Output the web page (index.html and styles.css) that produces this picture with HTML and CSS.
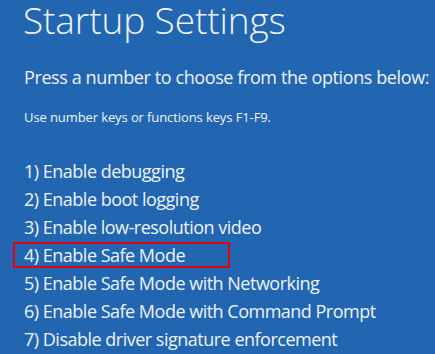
FILE: index.html
```html
<!DOCTYPE html>
<html lang="en">
<head>
<meta charset="utf-8">
<title>Startup Settings</title>
<link rel="stylesheet" href="styles.css">
</head>
<body>
<main class="screen">
  <h1 class="title">Startup Settings</h1>
  <p class="prompt">Press a number to choose from the options below:</p>
  <p class="hint">Use number keys or functions keys F1-F9.</p>
  <ol class="options">
    <li>1) Enable debugging</li>
    <li>2) Enable boot logging</li>
    <li>3) Enable low-resolution video</li>
    <li class="selected">4) Enable Safe Mode</li>
    <li>5) Enable Safe Mode with Networking</li>
    <li>6) Enable Safe Mode with Command Prompt</li>
    <li>7) Disable driver signature enforcement</li>
  </ol>
</main>
</body>
</html>
```

FILE: styles.css
```css
html, body {
  margin: 0;
  padding: 0;
  background: #2266b1;
}

.screen {
  width: 435px;
  height: 354px;
  overflow: hidden;
  box-sizing: border-box;
  padding: 0 0 0 23px;
  color: #eef3fa;
  font-family: "Open Sans", "Noto Sans", sans-serif;
}

.title {
  margin: 0;
  font-size: 37px;
  line-height: 40px;
  font-weight: 300;
  letter-spacing: -0.1px;
  white-space: nowrap;
}

.prompt {
  margin: 25px 0 0 1px;
  font-size: 18px;
  line-height: 24px;
  font-weight: 400;
  letter-spacing: -0.4px;
  white-space: nowrap;
}

.hint {
  margin: 19px 0 0 1px;
  font-size: 13px;
  line-height: 18px;
  letter-spacing: -0.1px;
  white-space: nowrap;
}

.options {
  list-style: none;
  margin: 31px 0 0 1px;
  padding: 0;
  font-size: 18px;
  line-height: 28px;
  letter-spacing: -0.5px;
}

.options li {
  position: relative;
  white-space: nowrap;
}

.options .selected::after {
  content: "";
  position: absolute;
  left: -11px;
  top: 1px;
  width: 217px;
  height: 26px;
  border: 2px solid #e3000f;
  box-sizing: border-box;
}
```
